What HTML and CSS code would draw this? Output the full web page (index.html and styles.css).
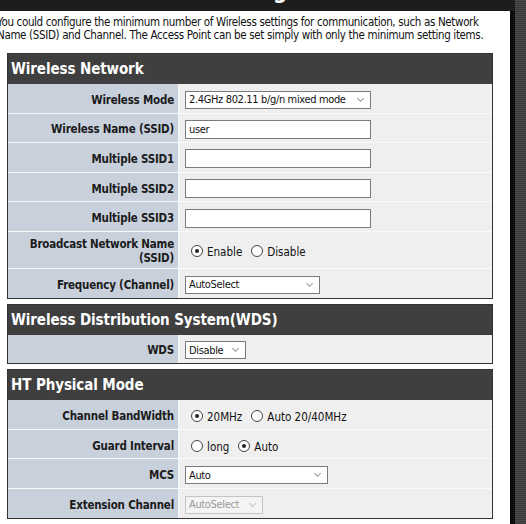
FILE: index.html
```html
<!DOCTYPE html>
<html>
<head>
<meta charset="utf-8">
<link rel="stylesheet" href="styles.css">
</head>
<body>
<div class="frame">
  <div class="main">
    <div class="topbar"><div class="title">Wireless Setting</div></div>
    <div class="content">
      <p class="intro">You could configure the minimum number of Wireless settings for communication, such as Network Name (SSID) and Channel. The Access Point can be set simply with only the minimum setting items.</p>

      <div class="box">
        <div class="head">Wireless Network</div>
        <div class="grid">
          <div class="lbl">Wireless Mode</div>
          <div class="val"><span class="sel w185">2.4GHz 802.11 b/g/n mixed mode<i class="chev"></i></span></div>
          <div class="lbl">Wireless Name (SSID)</div>
          <div class="val"><span class="txt">user</span></div>
          <div class="lbl">Multiple SSID1</div>
          <div class="val"><span class="txt"></span></div>
          <div class="lbl">Multiple SSID2</div>
          <div class="val"><span class="txt"></span></div>
          <div class="lbl">Multiple SSID3</div>
          <div class="val"><span class="txt"></span></div>
          <div class="lbl tall">Broadcast Network Name<br>(SSID)</div>
          <div class="val tall"><span class="radio on"></span><span class="rl">Enable</span><span class="radio"></span><span class="rl">Disable</span></div>
          <div class="lbl">Frequency (Channel)</div>
          <div class="val"><span class="sel w134">AutoSelect<i class="chev"></i></span></div>
        </div>
      </div>

      <div class="box">
        <div class="head">Wireless Distribution System(WDS)</div>
        <div class="grid">
          <div class="lbl">WDS</div>
          <div class="val"><span class="sel w60">Disable<i class="chev"></i></span></div>
        </div>
      </div>

      <div class="box">
        <div class="head">HT Physical Mode</div>
        <div class="grid">
          <div class="lbl">Channel BandWidth</div>
          <div class="val"><span class="radio on"></span><span class="rl">20MHz</span><span class="radio"></span><span class="rl">Auto 20/40MHz</span></div>
          <div class="lbl">Guard Interval</div>
          <div class="val"><span class="radio"></span><span class="rl">long</span><span class="radio on"></span><span class="rl">Auto</span></div>
          <div class="lbl">MCS</div>
          <div class="val"><span class="sel w142">Auto<i class="chev"></i></span></div>
          <div class="lbl">Extension Channel</div>
          <div class="val"><span class="sel w77 dis">AutoSelect<i class="chev"></i></span></div>
        </div>
      </div>

      <div class="box stub"></div>
    </div>
  </div>
  <div class="scroll"></div>
</div>
</body>
</html>
```
FILE: styles.css
```css
html, body {
  margin: 0;
  padding: 0;
  height: 100%;
  overflow: hidden;
}
body {
  font-family: "DejaVu Sans", sans-serif;
  font-stretch: condensed;
  font-size: 11.5px;
  color: #111;
  background: #111;
}
.frame {
  display: flex;
  height: 524px;
}
.main {
  width: 515px;
  background: #0c0c0c;
  display: flex;
  flex-direction: column;
}
.topbar {
  height: 11px;
  background: #1d1d1d;
  overflow: hidden;
  position: relative;
}
.title {
  position: absolute;
  left: 103px;
  top: -22px;
  color: #fff;
  font-weight: bold;
  font-size: 22px;
  line-height: 28px;
}
.content {
  width: 510px;
  flex: 1;
  background: #fff;
  overflow: hidden;
}
.intro {
  margin: 5px 0 11px -3px;
  line-height: 13px;
  width: 500px;
  letter-spacing: -0.35px;
  color: #111;
}
.box {
  margin: 0 0 5px 7px;
  width: 484px;
  border: 1px solid #333;
  background: #fff;
}
.head {
  background: #3f3f3f;
  color: #fff;
  font-weight: bold;
  font-size: 15px;
  letter-spacing: -0.1px;
  height: 30px;
  line-height: 30px;
  padding-left: 3px;
}
.grid {
  display: grid;
  grid-template-columns: 170px 1fr;
  column-gap: 1px;
  row-gap: 1px;
  background: #fafafa;
}
.lbl, .val {
  box-sizing: border-box;
  height: 28.6px;
  padding-top: 3px;
  display: flex;
  align-items: center;
}
.lbl {
  background: #c8d0dc;
  font-weight: bold;
  text-align: right;
  padding-right: 4px;
  justify-content: flex-end;
  color: #1b1b1b;
  line-height: 14px;
  letter-spacing: -0.2px;
}
.lbl.tall, .val.tall {
  height: 36px;
}
.val {
  background: #efefef;
  padding-left: 6px;
}
.sel, .txt {
  box-sizing: border-box;
  height: 18px;
  border: 1px solid #7a7a7a;
  background: #fff;
  display: inline-flex;
  align-items: center;
  padding-left: 3px;
  position: relative;
  font-size: 11px;
  letter-spacing: -0.35px;
  color: #111;
  white-space: nowrap;
  overflow: hidden;
}
.txt {
  width: 186px;
  height: 19px;
}
.w185 { width: 186px; }
.w134 { width: 135px; }
.w60 { width: 61px; }
.w142 { width: 143px; }
.w77 { width: 78px; }
.chev {
  position: absolute;
  right: 7px;
  top: 4px;
  width: 4px;
  height: 4px;
  border-right: 1px solid #999;
  border-bottom: 1px solid #999;
  transform: rotate(45deg);
  background: #fff;
}
.sel.dis {
  border-color: #c4c4c4;
  background: #f4f4f4;
  color: #999;
}
.sel.dis .chev {
  border-color: #c4c4c4;
  background: #f4f4f4;
}
.radio {
  box-sizing: border-box;
  width: 12px;
  height: 12px;
  border: 1px solid #444;
  border-radius: 50%;
  background: #fff;
  margin-left: 6px;
  position: relative;
}
.radio.on::after {
  content: "";
  position: absolute;
  left: 3px;
  top: 3px;
  width: 4px;
  height: 4px;
  border-radius: 50%;
  background: #222;
}
.rl {
  margin: 2px 3px 0 4px;
}
.stub {
  height: 20px;
}
.scroll {
  width: 11px;
  background: repeating-linear-gradient(to bottom, #4a4a4a 0 1px, #3a3a3a 1px 2px);
}
```
